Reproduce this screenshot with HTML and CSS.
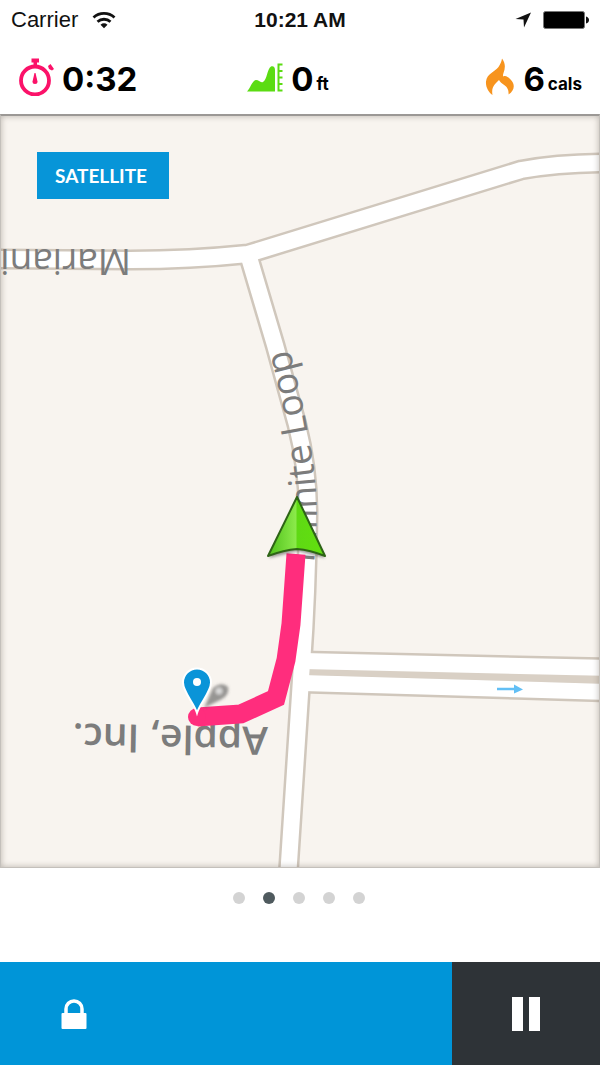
FILE: index.html
```html
<!DOCTYPE html>
<html lang="en">
<head>
  <meta charset="UTF-8">
  <meta name="viewport" content="width=device-width, initial-scale=1.0">
  <title>Run Tracker - Map</title>
  <link rel="stylesheet" href="styles.css">
</head>
<body>

  <div class="status-bar">
    <div class="carrier">
      <span>Carrier</span>
      <svg width="24" height="18" viewBox="0 0 24 18" aria-hidden="true">
        <path d="M1.500 6.500a15.500 15.500 0 0 1 21 0M5.500 10.800a9.600 9.600 0 0 1 13 0" fill="none" stroke="#111" stroke-width="2.800"/>
        <path d="M8.500 13.700a5.500 5.500 0 0 1 7 0L12 17.300z" fill="#111"/>
      </svg>
    </div>
    <div class="time">10:21 AM</div>
    <div class="indicators">
      <svg width="17" height="16" viewBox="0 0 17 16" aria-hidden="true">
        <path d="M16 0.500L9 15.500L8.500 7.500L0.500 7z" fill="#111"/>
      </svg>
      <svg width="46" height="18" viewBox="0 0 46 18" aria-hidden="true">
        <rect x="0.500" y="0.500" width="41" height="17" rx="2" fill="#000" stroke="#777"/>
        <path d="M43 5.500q3 1 3 3.500t-3 3.500z" fill="#111"/>
      </svg>
    </div>
  </div>

  <header class="stats">
    <div class="stat">
      <svg width="36" height="38" viewBox="0 0 36 38" aria-hidden="true">
        <circle cx="17" cy="22.500" r="14" fill="none" stroke="#fb1269" stroke-width="3.800"/>
        <path d="M13.500 0.500h7.500v4h-2v4h-3.500v-4h-2zM30 8l2.500-2 3.500 5-2 1.500-3-1.500z" fill="#fb1269"/>
        <path d="M16.500 15h1l2 8.500q0 2.500-2.500 2.500t-2.500-2.500z" fill="#fb1269"/>
      </svg>
      <span class="value">0:32</span>
    </div>
    <div class="stat elevation">
      <svg width="36" height="29" viewBox="0 0 36 29" aria-hidden="true">
        <path d="M0 28.500C3 26 5 17.500 9 17c3 0 4 3 7 2 4-2 4-13 8-15.500 2.500-1 4 1 4 3.500v21.500z" fill="#5bdc12"/>
        <path d="M35.500 1.500h-4v26h4M31 8h4.500M31 14.500h4.500M31 21h4.500" fill="none" stroke="#5bdc12" stroke-width="2"/>
      </svg>
      <span class="value">0</span>
      <span class="unit">ft</span>
    </div>
    <div class="stat">
      <svg width="30" height="38" viewBox="0 0 30 38" aria-hidden="true">
        <path d="M17 0.500C20.500 5 20.500 10 18.500 15q-1 2.500 0 3.500C21 17 24 20 26 22c4 4 4 10-2.500 14.500C24 31 21.500 28.500 18.500 26.500 16.500 25 15 24 14 22c-4 4-8 7-6.500 15C3.500 34 .5 29 1 23.500 2 15.500 9.500 14 13.500 9c2-3 3-5.500 3.500-8.500z" fill="#f7941e"/>
      </svg>
      <span class="value">6</span>
      <span class="unit">cals</span>
    </div>
  </header>

  <main class="map">
    <svg class="map-canvas" viewBox="0 0 600 754" role="img" aria-label="Map of the current run">
      <defs>
        <linearGradient id="arrowFill" x1="0" y1="0" x2="1" y2="0">
          <stop offset="0" stop-color="#4fc01a"/>
          <stop offset="0.490" stop-color="#8bea4a"/>
          <stop offset="0.510" stop-color="#5fd914"/>
          <stop offset="1" stop-color="#62e00e"/>
        </linearGradient>
        <filter id="soft" x="-50%" y="-50%" width="200%" height="200%">
          <feGaussianBlur stdDeviation="1.500"/>
        </filter>
        <path id="loopLabel" d="M314 449C318 410 318 370 309 324Q303 285 283 210"/>
      </defs>

      <!-- road edges -->
      <g class="road-edge">
        <path d="M-10 145L130 146Q190 146 248 140L521 56Q560 49 610 49"/>
        <path d="M248 140L275 231L297 311Q308 355 308 400Q307 480 302 550L288 764"/>
        <path d="M303 547L610 554"/>
        <path d="M303 569L610 578"/>
      </g>
      <path class="median" d="M310 554L610 562V570L310 561z"/>

      <!-- road surface -->
      <g class="road">
        <path d="M-10 145L130 146Q190 146 248 140L521 56Q560 49 610 49"/>
        <path d="M248 140L275 231L297 311Q308 355 308 400Q307 480 302 550L288 764"/>
        <path d="M303 547L610 554"/>
        <path d="M303 569L610 578"/>
      </g>
      <path d="M497 575h18" stroke="#62bff5" stroke-width="2.500"/>
      <path d="M514 570.500l9 5-9 4z" fill="#62bff5"/>

      <!-- labels -->
      <text class="label" transform="translate(131 135) rotate(180)">Mariani</text>
      <text class="label"><textPath href="#loopLabel">Infinite Loop</textPath></text>
      <text class="label place" transform="translate(268 613) rotate(181)">Apple, Inc.</text>

      <!-- run -->
      <path class="track" d="M296 440L291 510L286 546L276 584L241 600L197 603"/>
      <circle class="track-start" cx="197" cy="603" r="9"/>
      <g filter="url(#soft)">
        <path d="M204 594L213 574Q222 567 228 573Q230 582 218 587z" fill="#555" opacity="0.600"/>
        <circle cx="219" cy="577" r="3" fill="#ddd"/>
      </g>
      <path d="M197 599C194 589 183 578 183 568.500a14 14 0 0 1 28 0C211 578 200 589 197 599z" fill="#0a94d8" stroke="#fff" stroke-width="2"/>
      <circle cx="197" cy="568" r="4" fill="#fff"/>
      <path d="M297 386L325 444L297 437L269 444z" fill="#333" opacity="0.500" filter="url(#soft)"/>
      <path d="M297 383L325 442Q310 436 297 435Q284 436 268 442z" fill="url(#arrowFill)" stroke="#2e6416" stroke-width="2" stroke-linejoin="round"/>
    </svg>
    <button class="satellite" type="button">SATELLITE</button>
  </main>

  <nav class="pager" aria-label="Pages">
    <a href="#page1" aria-label="Page 1"></a>
    <a href="#page2" aria-label="Page 2" class="active"></a>
    <a href="#page3" aria-label="Page 3"></a>
    <a href="#page4" aria-label="Page 4"></a>
    <a href="#page5" aria-label="Page 5"></a>
  </nav>

  <footer class="controls">
    <button class="lock" type="button" aria-label="Lock">
      <svg width="26" height="30" viewBox="0 0 26 30" aria-hidden="true">
        <path d="M5 15V10a8 8 0 0 1 16 0v5" fill="none" stroke="#fff" stroke-width="3.500"/>
        <rect x="0.500" y="14" width="25" height="16" rx="1" fill="#fff"/>
      </svg>
    </button>
    <button class="pause" type="button" aria-label="Pause">
      <svg width="28" height="34" viewBox="0 0 28 34" aria-hidden="true">
        <path d="M0 0h11v34H0zM17 0h11v34H17z" fill="#fff"/>
      </svg>
    </button>
  </footer>

</body>
</html>
```
FILE: styles.css
```css
* {
  box-sizing: border-box;
}
body {
  margin: 0;
  min-height: 100vh;
  display: flex;
  flex-direction: column;
  background-color: #fff;
  color: #111;
  font-family: Inter, "Liberation Sans", sans-serif;
}
svg {
  display: block;
  flex-shrink: 0;
}
button {
  border: none;
  padding: 0;
  cursor: pointer;
}

/* status bar */
.status-bar {
  display: grid;
  grid-template-columns: 1fr auto 1fr;
  align-items: center;
  height: 40px;
  padding: 0 11px;
  font-family: "Liberation Sans", Arial, sans-serif;
  font-size: 22px;
}
.carrier {
  display: flex;
  align-items: center;
  gap: 14px;
}
.time {
  font-size: 21px;
  font-weight: bold;
}
.indicators {
  display: flex;
  align-items: center;
  justify-content: flex-end;
  gap: 11px;
}

/* stats */
.stats {
  display: grid;
  grid-template-columns: 1fr auto 1fr;
  align-items: center;
  height: 74px;
  padding: 0 18px;
}
.stat {
  display: flex;
  align-items: center;
}
.stat:last-child {
  justify-content: flex-end;
}
.elevation {
  padding-right: 24px;
}
.value {
  margin-left: 8px;
  padding-top: 4px;
  font-size: 33px;
  line-height: 40px;
  font-weight: 700;
  color: #000;
}
.unit {
  margin-left: 3px;
  padding-top: 14px;
  font-size: 17px;
  line-height: 24px;
  font-weight: 700;
  color: #000;
}

/* map */
.map {
  position: relative;
  background-color: #f8f4ef;
}
.map::after {
  content: "";
  position: absolute;
  inset: 0;
  border: 1px solid #c4c0bb;
  border-top: 2px solid #9b9895;
  box-shadow: inset 0 0 6px rgba(90, 80, 70, 0.4);
  pointer-events: none;
}
.map-canvas {
  width: 100%;
  height: auto;
}
.road-edge path {
  fill: none;
  stroke: #d0c7bc;
  stroke-width: 21;
}
.road path {
  fill: none;
  stroke: #fff;
  stroke-width: 16;
}
.median {
  fill: #d9d0c5;
}
.label {
  font-family: "Open Sans", sans-serif;
  font-size: 37px;
  fill: #7c7c7c;
}
.place {
  font-weight: 600;
  font-size: 39px;
}
.track {
  fill: none;
  stroke: #ff2d7d;
  stroke-width: 19;
}
.track-start {
  fill: #ff2d7d;
}
.satellite {
  position: absolute;
  top: 38px;
  left: 37px;
  width: 132px;
  height: 47px;
  padding-right: 4px;
  background-color: #0795d8;
  color: #fff;
  font-family: Lato, sans-serif;
  font-size: 19px;
  font-weight: 700;
}

/* page dots */
.pager {
  display: flex;
  justify-content: center;
  gap: 18px;
  padding: 24px 2px 0 0;
  height: 94px;
}
.pager a {
  width: 12px;
  height: 12px;
  border-radius: 50%;
  background-color: #d3d3d3;
}
.pager .active {
  background-color: #4f5a5e;
}

/* bottom controls */
.controls {
  display: flex;
  height: 103px;
  margin-top: auto;
}
.lock {
  flex: 1;
  padding-left: 61px;
  background-color: #0095d8;
}
.pause {
  display: flex;
  align-items: center;
  justify-content: center;
  width: 148px;
  background-color: #2e3337;
}
```
